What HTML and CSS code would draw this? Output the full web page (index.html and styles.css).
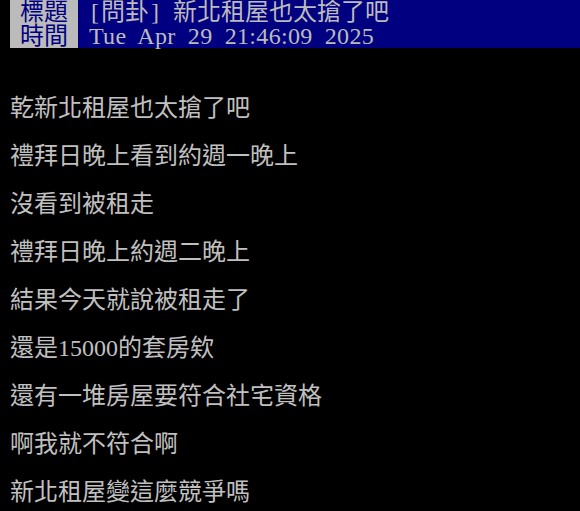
FILE: index.html
```html
<!DOCTYPE html>
<html lang="zh-Hant">
<head>
<meta charset="utf-8">
<link rel="stylesheet" href="styles.css">
</head>
<body>
<div class="meta">
  <div class="meta-row"><span class="tag">標題</span><span class="value"><span class="half">[</span>問卦<span class="half">]</span><span class="half"> </span>新北租屋也太搶了吧</span></div>
  <div class="meta-row"><span class="tag">時間</span><span class="value latin">Tue Apr 29 21:46:09 2025</span></div>
</div>
<div class="content">
  <div class="line"></div>
  <div class="line"></div>
  <div class="line">乾新北租屋也太搶了吧</div>
  <div class="line"></div>
  <div class="line">禮拜日晚上看到約週一晚上</div>
  <div class="line"></div>
  <div class="line">沒看到被租走</div>
  <div class="line"></div>
  <div class="line">禮拜日晚上約週二晚上</div>
  <div class="line"></div>
  <div class="line">結果今天就說被租走了</div>
  <div class="line"></div>
  <div class="line">還是<span class="num">15000</span>的套房欸</div>
  <div class="line"></div>
  <div class="line">還有一堆房屋要符合社宅資格</div>
  <div class="line"></div>
  <div class="line">啊我就不符合啊</div>
  <div class="line"></div>
  <div class="line">新北租屋變這麼競爭嗎</div>
</div>
</body>
</html>
```
FILE: styles.css
```css
html, body {
  margin: 0;
  padding: 0;
  background: #000;
}
body {
  font-family: "Liberation Serif", "Noto Sans CJK TC", serif;
  font-size: 24px;
  line-height: 24px;
  color: #c0c0c0;
  overflow: hidden;
}
.meta {
  padding-left: 10px;
}
.meta-row {
  display: flex;
  height: 24px;
}
.tag {
  background: #bbbbbb;
  color: #000080;
  padding: 0 10px;
  white-space: nowrap;
}
.value {
  flex: 1;
  background: #000080;
  color: #bbbbbb;
  padding-left: 11px;
  white-space: nowrap;
}
.half {
  display: inline-block;
  width: 12px;
  text-align: center;
  white-space: pre;
}
.latin {
  word-spacing: 6px;
  letter-spacing: 0.3px;
}
.content {
  padding-left: 10px;
}
.line {
  height: 24px;
  white-space: nowrap;
}
.num {
  letter-spacing: 0;
}
```
